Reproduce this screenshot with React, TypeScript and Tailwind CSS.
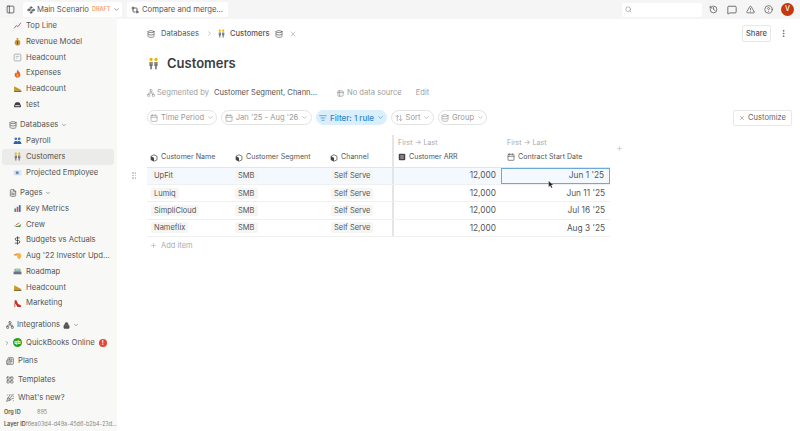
import React from "react";
import { PanelLeft, Waypoints, GitCompare, ChevronDown, ChevronRight, Search, History, MessageSquare, TriangleAlert, CircleHelp, EllipsisVertical, Database, X, Calendar, ListFilter, ArrowUpDown, Plus, FileText, Lock, Network, LayoutGrid, PartyPopper, Newspaper, Table2, DollarSign } from "lucide-react";

const Emoji = ({ kind, size = 9 }: { kind: string; size?: number }) => {
  const body: Record<string, React.ReactNode> = {
    chart: <><rect x="1" y="1" width="14" height="14" fill="#f3f4f6" /><path d="M2 13 L6 8 L9 10 L14 3" stroke="#d9485f" strokeWidth="1.6" fill="none" /></>,
    money: <><circle cx="8" cy="10" r="5" fill="#c9973f" /><path d="M6 2h4l-1 3H7z" fill="#b5842f" /><rect x="7" y="7" width="2" height="6" fill="#6b4f1d" /></>,
    doc: <><rect x="2" y="2" width="12" height="12" rx="2" fill="none" stroke="#8a8f98" strokeWidth="1.2" /><path d="M5 6h6M5 9h3" stroke="#8a8f98" /></>,
    fire: <><path d="M8 1c1 3 5 5 5 9a5 5 0 0 1-10 0c0-2 1-3 2-4 0 1 1 2 1 2 1-2 1-5 2-7z" fill="#ef5b24" /><path d="M8 8c1 1 2 2 2 3.500a2 2 0 0 1-4 0C6 10 7 9 8 8z" fill="#fbbf24" /></>,
    heel: <><path d="M2 4 L14 10 V12 H6 L3 12 V14 H2 z" fill="#c99a1c" /><path d="M2 12h13v2H2z" fill="#6b5a2b" /></>,
    car: <><path d="M3 8c0-3 2-4 5-4s5 1 5 4l1 1v4H2V9z" fill="#3f3f46" /><rect x="4" y="9" width="8" height="2" fill="#d4d4d8" /></>,
    payroll: <><circle cx="5" cy="5" r="2.500" fill="#4a78b8" /><circle cx="11" cy="5" r="2.500" fill="#4a78b8" /><path d="M1 14c0-3 2-5 4-5s3 1 3 2c0-1 1-2 3-2s4 2 4 5z" fill="#3463a3" /></>,
    people: <><circle cx="5" cy="3" r="2" fill="#eab308" /><circle cx="11" cy="3" r="2" fill="#eab308" /><path d="M3 6h4v5H6v4H4v-4H3z" fill="#71717a" /><path d="M9 6h4v5h-1v4h-2v-4H9z" fill="#71717a" /><path d="M4.500 6h1v3h-1zM10.500 6h1v3h-1z" fill="#eab308" /></>,
    id: <><rect x="1" y="4" width="14" height="9" fill="#dbe4ee" /><rect x="5" y="6" width="5" height="5" fill="#5b8fc7" /></>,
    bars: <><rect x="1" y="1" width="14" height="14" fill="#f1f5f9" /><rect x="2.500" y="8" width="3" height="6" fill="#2f9e5a" /><rect x="6.500" y="5" width="3" height="9" fill="#d9485f" /><rect x="10.500" y="2" width="3" height="12" fill="#2d6cc0" /></>,
    boat: <><path d="M1 9 C5 12 11 11 15 6 L13 12 C9 13 4 13 1 9z" fill="#4d8f3b" /><path d="M5 9 L11 5" stroke="#d9485f" strokeWidth="1.5" /></>,
    hand: <><path d="M1 7 L7 4 L13 4 L15 9 L12 14 L8 13 L7 8 z" fill="#f5b342" /><path d="M1 7 L6 5 L7 7 L3 8 z" fill="#e8792e" /></>,
    road: <><rect x="3" y="3" width="10" height="5" rx="1" fill="#4a9a5d" /><rect x="1" y="8" width="14" height="5" fill="#6b7280" /><rect x="4" y="4" width="8" height="2.500" fill="#bcd7ee" /></>,
    shoe: <><path d="M3 2 L6 2 L9 9 L14 11 L14 14 L8 14 L4 8 L4 14 L2.500 14 z" fill="#c8312b" /></>,
  };
  return <svg viewBox="0 0 16 16" width={size} height={size} className="shrink-0">{body[kind]}</svg>;
};

const CubeIcon = () => (
  <svg viewBox="0 0 16 16" width="8" height="8" className="shrink-0 mb-[1px]">
    <path d="M8 1.500 14 4.500 V11.500 L8 14.500 2 11.500 V4.500 Z" fill="none" stroke="#444" strokeWidth="1.4" />
    <path d="M8 7.500 2 4.500 V11.500 L8 14.500 Z" fill="#444" />
  </svg>
);

const ArrIcon = () => (
  <svg viewBox="0 0 16 16" width="8" height="8" className="shrink-0">
    <rect x="1.500" y="1.500" width="13" height="13" rx="2" fill="#444" />
    <path d="M4.500 5.500h7M4.500 8h7M4.500 10.500h7" stroke="#fff" strokeWidth="1" />
  </svg>
);

const Item = ({ icon, label, active }: { icon: string; label: string; active?: boolean }) => (
  <div className={`flex items-center h-[15.75px] ml-[2px] pl-[11px] gap-[4px] mr-[3px] rounded-[3px] ${active ? "bg-[#ebebea]" : ""}`}>
    <Emoji kind={icon} />
    <span className="truncate">{label}</span>
  </div>
);

const Section = ({ icon, label }: { icon: React.ReactNode; label: string }) => (
  <div className="flex items-center h-[16px] pl-[9px] gap-[3px]">
    {icon}
    <span>{label}</span>
    <ChevronDown size={6} strokeWidth={2} />
  </div>
);

const Bottom = ({ icon, label }: { icon: React.ReactNode; label: string }) => (
  <div className="flex items-center h-[18.5px] pl-[6px] gap-[4px]">
    {icon}
    <span>{label}</span>
  </div>
);

const Pill = ({ icon, label, w, blue }: { icon: React.ReactNode; label: string; w: string; blue?: boolean }) => (
  <div className={`flex items-center justify-center gap-[3px] h-[15px] rounded-full border whitespace-nowrap ${w} ${blue ? "bg-[#dbeefc] border-[#dbeefc] text-[#2b87c9] font-medium text-[8px]" : "border-[#e3e3e3] text-[#9a9a9a]"}`}>
    {icon}
    <span>{label}</span>
    <ChevronDown size={7} strokeWidth={2} />
  </div>
);

const rows = [
  ["UpFit", "12,000", "Jun 1 '25"],
  ["Lumiq", "12,000", "Jun 11 '25"],
  ["SimpliCloud", "12,000", "Jul 16 '25"],
  ["Nameflix", "12,000", "Aug 3 '25"],
];

const Chip = ({ children }: { children: React.ReactNode }) => (
  <span className="bg-[#f5f5f4] rounded-[2px] px-[3px] py-[1px] leading-[13px] text-[7.5px]">{children}</span>
);

const cols = "grid grid-cols-[85px_95px_65px_109px_109px]";

export default function App() {
  return (
    <div className="w-[800px] h-[431px] overflow-hidden bg-white font-[family-name:Inter] text-[7.7px] text-[#555] flex flex-col">
      <header className="h-[19px] shrink-0 bg-[#f5f5f5] flex items-center">
        <PanelLeft size={9} className="ml-[6px] text-[#444]" />
        <div className="ml-[8px] w-[99px] h-[15px] bg-white rounded-[2px] flex items-center pl-[4px]">
          <Waypoints size={8} strokeWidth={2.5} className="text-[#444]" />
          <span className="whitespace-nowrap ml-[2px]">Main Scenario</span>
          <span className="ml-[3px] text-[5.5px] font-semibold text-[#f0a070]">DRAFT</span>
          <ChevronDown size={7} className="ml-[3px]" />
        </div>
        <div className="ml-[5px] w-[101px] h-[15px] bg-white rounded-[2px] flex items-center pl-[4px] gap-[3px] whitespace-nowrap">
          <GitCompare size={8} strokeWidth={2.5} className="text-[#444]" />
          <span>Compare and merge...</span>
        </div>
        <div className="ml-[394px] w-[80px] h-[14px] bg-white rounded-[2px] flex items-center pl-[3px]">
          <Search size={7} className="text-[#888]" />
        </div>
        <div className="ml-[7px] flex items-center gap-[9px] text-[#555]">
          <History size={9} />
          <MessageSquare size={10} />
          <TriangleAlert size={9} />
          <CircleHelp size={9} />
        </div>
        <div className="ml-[8px] w-[13px] h-[13px] rounded-full bg-[#c2380f] text-white text-[7px] flex items-center justify-center font-medium">V</div>
      </header>

      <div className="flex flex-1 min-h-0">
        <aside className="w-[117px] shrink-0 bg-[#f8f8f7] overflow-hidden whitespace-nowrap -mt-[1px]">
          <Item icon="chart" label="Top Line" />
          <Item icon="money" label="Revenue Model" />
          <Item icon="doc" label="Headcount" />
          <Item icon="fire" label="Expenses" />
          <Item icon="heel" label="Headcount" />
          <Item icon="car" label="test" />
          <div className="mt-[4.5px]">
            <Section icon={<Database size={8} />} label="Databases" />
            <Item icon="payroll" label="Payroll" />
            <Item icon="people" label="Customers" active />
            <Item icon="id" label="Projected Employee" />
          </div>
          <div className="mt-[4.5px]">
            <Section icon={<FileText size={8} />} label="Pages" />
            <Item icon="bars" label="Key Metrics" />
            <Item icon="boat" label="Crew" />
            <div className="flex items-center h-[15.75px] pl-[13px] gap-[4px]"><DollarSign size={9} className="text-[#333]" /><span>Budgets vs Actuals</span></div>
            <Item icon="hand" label="Aug '22 Investor Upd..." />
            <Item icon="road" label="Roadmap" />
            <Item icon="heel" label="Headcount" />
            <Item icon="shoe" label="Marketing" />
          </div>
          <div className="mt-[6px] flex items-center h-[16px] pl-[6px] gap-[3px]">
            <Network size={8} />
            <span>Integrations</span>
            <Lock size={7} className="fill-[#555]" />
            <ChevronDown size={6} />
          </div>
          <div className="flex items-center h-[19px] pl-[4px]">
            <ChevronRight size={6} />
            <span className="ml-[3px] w-[9px] h-[9px] rounded-full bg-[#2ca01c] text-white text-[5px] flex items-center justify-center font-bold">qb</span>
            <span className="ml-[4px]">QuickBooks Online</span>
            <span className="ml-[4px] w-[8px] h-[8px] rounded-full bg-[#e8452c] text-white text-[6px] font-bold flex items-center justify-center">!</span>
          </div>
          <Bottom icon={<Newspaper size={8} />} label="Plans" />
          <Bottom icon={<LayoutGrid size={8} />} label="Templates" />
          <Bottom icon={<PartyPopper size={8} />} label="What's new?" />
          <div className="flex items-center h-[12px] -mt-[1px] pl-[4px] text-[5.5px]"><span className="font-semibold w-[33px]">Org ID</span><span className="text-[#888]">895</span></div>
          <div className="flex items-center h-[12px] pl-[4px] text-[5.5px]"><span className="font-semibold">Layer ID</span><span className="text-[#888] truncate">f6ea03d4-d49a-45d6-b2b4-23d5f</span></div>
        </aside>

        <main className="flex-1 min-w-0 pl-[30px] relative text-[7.6px]">
          <div className="flex items-center h-[28px] gap-[4px] pt-[1px]">
            <Database size={8} className="mr-[2px]" />
            <span>Databases</span>
            <ChevronRight size={7} className="ml-[3px] text-[#999]" />
            <Emoji kind="people" />
            <span className="font-medium">Customers</span>
            <Database size={8} className="ml-[1px]" />
            <X size={8} className="ml-[2px] text-[#aaa]" />
            <div className="ml-auto mr-[29px] w-[29px] h-[17px] rounded-[2px] border border-[#e8e8e8] flex items-center justify-center font-medium">Share</div>
            <EllipsisVertical size={9} className="absolute left-[662px] top-[10px]" />
          </div>
          <div className="flex items-center h-[31px] gap-[7px] mt-[1px]">
            <Emoji kind="people" size={13} />
            <span className="text-[13px] font-semibold text-[#3d3d3d]">Customers</span>
          </div>
          <div className="flex items-center h-[26px] mt-[1px] whitespace-nowrap">
            <Network size={8} className="text-[#999]" />
            <span className="ml-[2px] text-[#a0a0a0]">Segmented by</span>
            <span className="ml-[5px] w-[123px] truncate">Customer Segment, Chann...</span>
            <Table2 size={7} className="text-[#888]" />
            <span className="ml-[3px] text-[#a0a0a0]">No data source</span>
            <span className="ml-[14px] text-[#a0a0a0]">Edit</span>
          </div>
          <div className="flex items-center gap-[4px] h-[17px] mt-[3px]">
            <Pill w="w-[70px]" icon={<Calendar size={8} />} label="Time Period" />
            <Pill w="w-[91px]" icon={<Calendar size={8} />} label="Jan '25 - Aug '26" />
            <Pill w="w-[71px]" blue icon={<ListFilter size={8} />} label="Filter: 1 rule" />
            <Pill w="w-[43px]" icon={<ArrowUpDown size={8} />} label="Sort" />
            <Pill w="w-[49px]" icon={<Database size={8} />} label="Group" />
            <div className="ml-auto mr-[8px] w-[59px] h-[16px] rounded-[2px] border border-[#e8e8e8] flex items-center justify-center gap-[3px] text-[#666]">
              <X size={6} />
              <span>Customize</span>
            </div>
          </div>

          <div className="mt-[8.5px] w-[463px] text-[7.1px]">
            <div className={`${cols} h-[33px] border-b border-[#e5e5e5]`}>
              {["Customer Name", "Customer Segment", "Channel"].map((t) => (
                <div key={t} className="flex items-end pb-[4px] pl-[3px] gap-[3px] whitespace-nowrap">
                  <CubeIcon />
                  <span>{t}</span>
                </div>
              ))}
              <div className="border-l-2 border-[#e5e5e5] pl-[4px] flex flex-col justify-end pb-[4px] gap-[3px] whitespace-nowrap">
                <span className="text-[#aaa]">First → Last</span>
                <span className="flex items-center gap-[3px]"><ArrIcon />Customer ARR</span>
              </div>
              <div className="pl-[6px] flex flex-col justify-end pb-[4px] gap-[3px] whitespace-nowrap">
                <span className="text-[#aaa]">First → Last</span>
                <span className="flex items-center gap-[3px]"><Calendar size={8} />Contract Start Date</span>
              </div>
            </div>
            {rows.map((r, i) => (
              <div key={r[0]} className={`${cols} h-[17.4px] border-b border-[#f0f0f0] relative items-center text-[8.3px] ${i === 0 ? "bg-[#f3f9fe]" : ""}`}>
                <div className="pl-[4px]"><Chip>{r[0]}</Chip></div>
                <div className="pl-[3px]"><Chip>SMB</Chip></div>
                <div className="pl-[4px]"><Chip>Self Serve</Chip></div>
                <div className="border-l-2 border-[#e5e5e5] h-full flex items-center justify-end pr-[5px]">{r[1]}</div>
                <div className={`h-full flex items-center justify-end pr-[5px] ${i === 0 ? "border-[1.5px] border-[#6aa9d8]" : ""}`}>{r[2]}</div>
              </div>
            ))}
            <div className="flex items-center h-[17px] pl-[3px] gap-[4px] text-[#aaa] text-[7.5px]">
              <Plus size={7} />
              <span>Add item</span>
            </div>
          </div>
          <Plus size={7} className="absolute left-[499px] top-[126px] text-[#bbb]" />
          <div className="absolute left-[15px] top-[153px] grid grid-cols-2 gap-[1px]">
            {[0, 1, 2, 3, 4, 5].map((n) => <span key={n} className="w-[1.5px] h-[1.5px] bg-[#bbb] rounded-full" />)}
          </div>
          <svg viewBox="0 0 10 14" width="6" height="9" className="absolute left-[431px] top-[161px]"><path d="M1 1 L1 11 L3.500 9 L5.500 13 L7.500 12 L5.500 8 L9 8 z" fill="#222" stroke="#fff" strokeWidth="0.5" /></svg>
        </main>
      </div>
    </div>
  );
}
